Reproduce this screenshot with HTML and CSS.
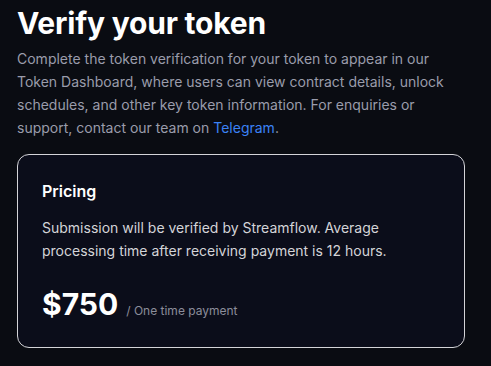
FILE: index.html
```html
<!DOCTYPE html>
<html>
<head>
<meta charset="utf-8">
<link rel="stylesheet" href="styles.css">
</head>
<body>
<main class="page">
  <h1 class="title">Verify your token</h1>
  <p class="intro">Complete the token verification for your token to appear in our Token Dashboard, where users can view contract details, unlock schedules, and other key token information. For enquiries or support, contact our team on <a class="link" href="#">Telegram</a>.</p>
  <section class="card">
    <h2 class="card-title">Pricing</h2>
    <p class="card-text">Submission will be verified by Streamflow. Average processing time after receiving payment is 12 hours.</p>
    <div class="price-row">
      <span class="price">$750</span>
      <span class="price-note">/ One time payment</span>
    </div>
  </section>
</main>
</body>
</html>
```
FILE: styles.css
```css
html, body {
  margin: 0;
  padding: 0;
  background: #0a0c12;
}
body {
  font-family: Inter, "Noto Sans", sans-serif;
  color: #fff;
}
.page {
  padding: 5px 26px 0 17px;
}
.title {
  margin: 0;
  font-size: 30px;
  line-height: 36px;
  font-weight: 700;
  letter-spacing: -0.2px;
  color: #ffffff;
}
.intro {
  margin: 6px 0 0;
  font-size: 14px;
  line-height: 23px;
  color: #9a9cab;
}
.link {
  color: #3b82f6;
  text-decoration: none;
}
.card {
  margin-top: 15px;
  border: 1px solid #d4d4d8;
  border-radius: 12px;
  background: #0b0d1a;
  padding: 24px 24px 25px;
}
.card-title {
  margin: 0;
  font-size: 16px;
  line-height: 24px;
  font-weight: 600;
  color: #fff;
}
.card-text {
  margin: 13px 0 0;
  font-size: 14px;
  line-height: 23px;
  color: #d4d4d8;
}
.price-row {
  margin-top: 24px;
  display: flex;
  align-items: baseline;
  gap: 8px;
}
.price {
  font-size: 30px;
  line-height: 36px;
  font-weight: 700;
  color: #fff;
}
.price-note {
  font-size: 12px;
  color: #8b8d9a;
}
```
